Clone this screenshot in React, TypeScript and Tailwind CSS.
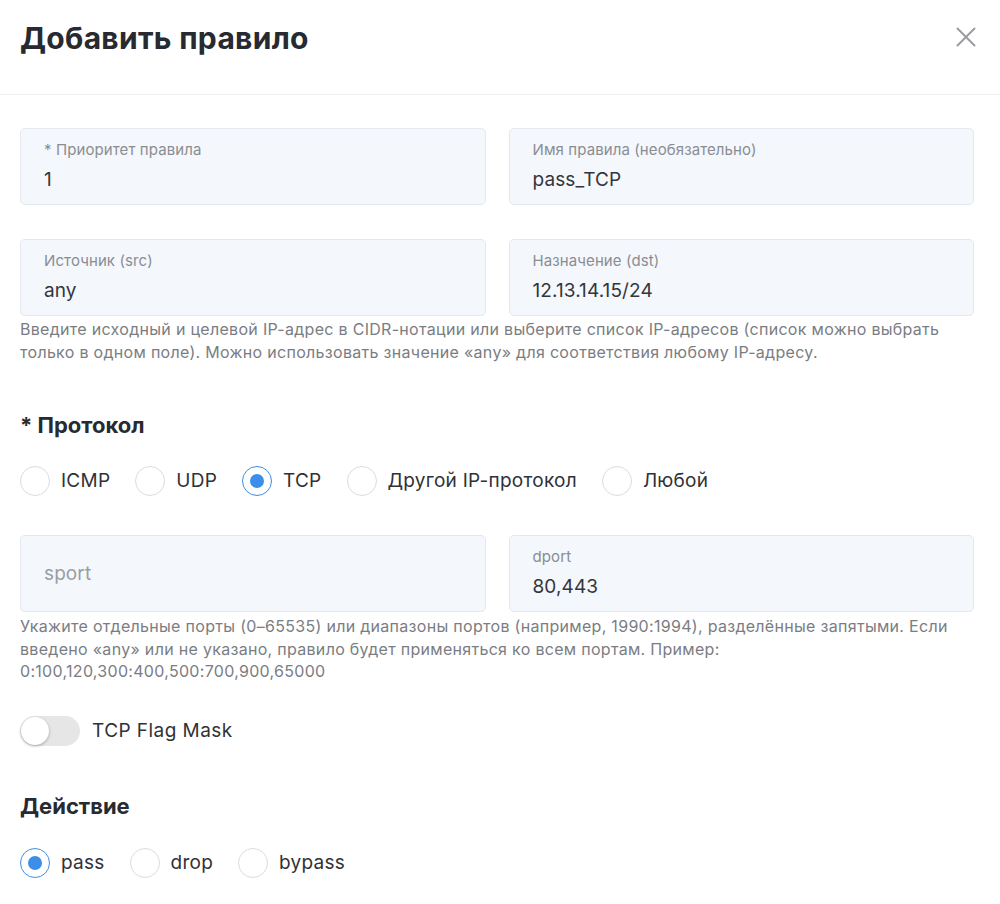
import React from 'react'
import { X } from 'lucide-react'

const font = { fontFamily: 'Inter, "Noto Sans", sans-serif' }

function Field({ label, value, placeholder }: { label?: string; value?: string; placeholder?: string }) {
  return (
    <div className="flex h-[77px] w-[466px] flex-col justify-center rounded-[5px] border border-[#e3e8ef] bg-[#f4f7fc] px-[23px]">
      {label && <div className="text-[15px] leading-[20px] tracking-[0.1px] text-[#8a8d93]">{label}</div>}
      {value ? (
        <div className="mt-[7px] text-[19px] leading-[26px] tracking-[0.1px] text-[#33363b]">{value}</div>
      ) : (
        <div className="text-[19px] leading-[26px] tracking-[0.1px] text-[#9a9da2]">{placeholder}</div>
      )}
    </div>
  )
}

function Radio({ label, checked }: { label: string; checked?: boolean }) {
  return (
    <label className="flex items-center gap-[11px]">
      {checked ? (
        <span className="flex h-[30px] w-[30px] items-center justify-center rounded-full border-[1.5px] border-[#3d8ee8] bg-white">
          <span className="h-[14px] w-[14px] rounded-full bg-[#3d8ee8]" />
        </span>
      ) : (
        <span className="h-[30px] w-[30px] rounded-full border-[1.5px] border-[#dcdcdc] bg-white" />
      )}
      <span className="text-[19px] leading-[26px] tracking-[0.25px] text-[#2f3237]">{label}</span>
    </label>
  )
}

export default function App() {
  return (
    <div className="min-h-[904px] w-[1000px] bg-white" style={font}>
      {/* Header */}
      <div className="flex h-[95px] items-start justify-between border-b border-[#eeeff1] pl-[20px] pr-[16px] pt-[19px]">
        <h1 className="text-[30px] font-bold leading-[38px] tracking-[0.3px] text-[#272a30]">Добавить правило</h1>
        <button className="flex h-[36px] w-[36px] items-center justify-center text-[#9a9ca1]">
          <X className="h-[34px] w-[34px]" strokeWidth={1.4} />
        </button>
      </div>

      <div className="pl-[20px] pr-[26px] pt-[33px]">
        <div className="flex gap-[23px]">
          <Field label="* Приоритет правила" value="1" />
          <Field label="Имя правила (необязательно)" value="pass_TCP" />
        </div>

        <div className="mt-[34px] flex gap-[23px]">
          <Field label="Источник (src)" value="any" />
          <Field label="Назначение (dst)" value="12.13.14.15/24" />
        </div>
        <p className="mt-[2px] text-[16px] leading-[23px] tracking-[0.3px] text-[#7a7d82]">
          Введите исходный и целевой IP-адрес в CIDR-нотации или выберите список IP-адресов (список можно выбрать
          только в одном поле). Можно использовать значение «any» для соответствия любому IP-адресу.
        </p>

        <h2 className="mt-[47px] text-[22px] font-bold leading-[28px] text-[#272a30]">* Протокол</h2>
        <div className="mt-[27px] flex items-center gap-[25px]">
          <Radio label="ICMP" />
          <Radio label="UDP" />
          <Radio label="TCP" checked />
          <Radio label="Другой IP-протокол" />
          <Radio label="Любой" />
        </div>

        <div className="mt-[39px] flex gap-[23px]">
          <Field placeholder="sport" />
          <Field label="dport" value="80,443" />
        </div>
        <p className="mt-[3px] text-[16px] leading-[22.5px] tracking-[0.3px] text-[#7a7d82]">
          Укажите отдельные порты (0–65535) или диапазоны портов (например, 1990:1994), разделённые запятыми. Если
          введено «any» или не указано, правило будет применяться ко всем портам. Пример:
          <br />
          0:100,120,300:400,500:700,900,65000
        </p>

        <div className="mt-[33px] flex items-center gap-[12px]">
          <span className="flex h-[30px] w-[60px] items-center rounded-full bg-[#e6e6e6] px-[1px]">
            <span className="h-[28px] w-[28px] rounded-full bg-white shadow-[0_1px_3px_rgba(0,0,0,0.3)]" />
          </span>
          <span className="text-[19px] leading-[26px] tracking-[0.45px] text-[#2f3237]">TCP Flag Mask</span>
        </div>

        <h2 className="mt-[46px] text-[22px] font-bold leading-[28px] text-[#272a30]">Действие</h2>
        <div className="mt-[28px] flex items-center gap-[25px]">
          <Radio label="pass" checked />
          <Radio label="drop" />
          <Radio label="bypass" />
        </div>
      </div>
    </div>
  )
}
